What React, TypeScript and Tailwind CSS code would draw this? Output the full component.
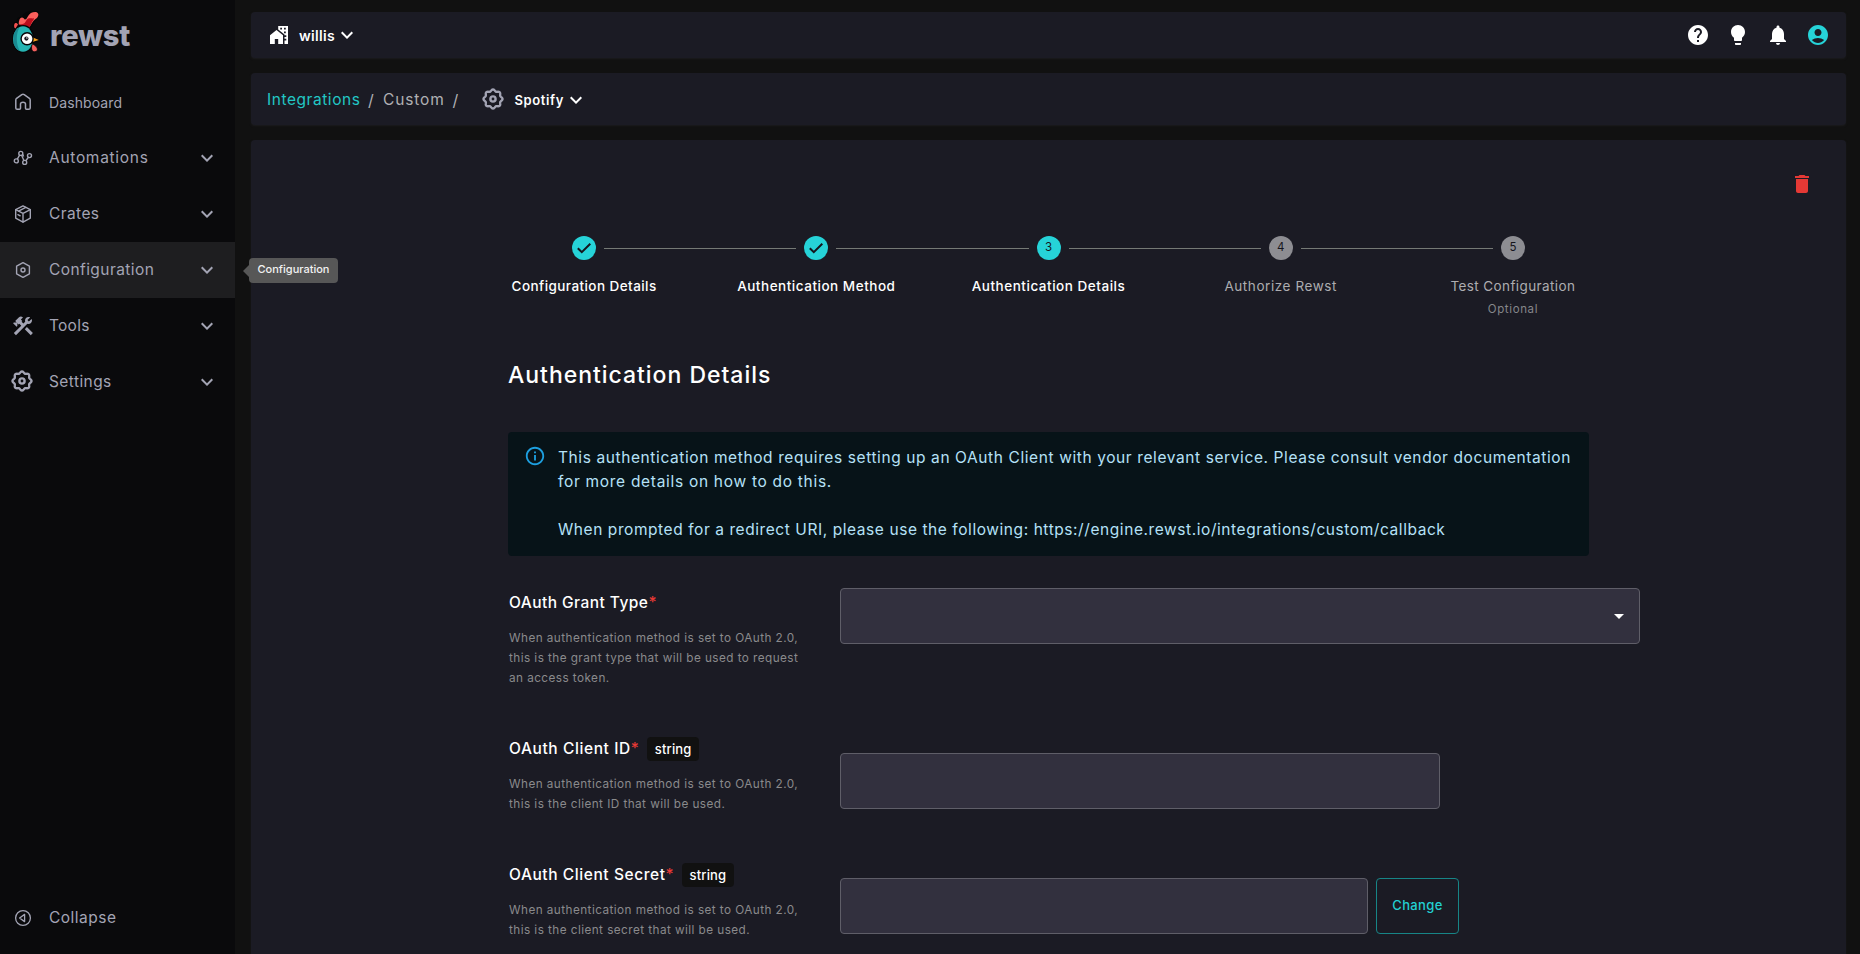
import type { ReactNode } from "react";
import {
  MdAccountCircle,
  MdArrowDropDown,
  MdConstruction,
  MdDelete,
  MdExpandMore,
  MdHelp,
  MdInfoOutline,
  MdLightbulb,
  MdNotifications,
} from "react-icons/md";

const scallop = (() => {
  const pts: string[] = [];
  for (let i = 0; i < 96; i++) {
    const a = (i / 96) * Math.PI * 2;
    const r = 8.7 + 0.85 * Math.cos(8 * a);
    pts.push(`${(12 + r * Math.cos(a)).toFixed(2)} ${(12 + r * Math.sin(a)).toFixed(2)}`);
  }
  return `M${pts.join("L")}Z`;
})();

function GearIcon() {
  return (
    <svg viewBox="0 0 24 24" className="size-6 text-[#a3a4b4]" fill="none" stroke="currentColor" strokeWidth="2.3" strokeLinejoin="round">
      <path d={scallop} />
      <circle cx="12" cy="12" r="2.6" strokeWidth="2.4" />
    </svg>
  );
}

function HomeIcon() {
  return (
    <svg viewBox="0 0 20 20" className="size-5" fill="none" stroke="currentColor" strokeWidth="1.5" strokeLinejoin="round">
      <path d="M2.8 8Q2.8 7 3.6 6.3L8.8 2.6Q10 1.8 11.2 2.600L16.4 6.300Q17.2 7 17.2 8V16Q17.2 17.300 15.900 17.300H13.500Q12.500 17.300 12.500 16.300V12Q12.500 10.200 10 10.200Q7.500 10.200 7.500 12V16.300Q7.500 17.300 6.500 17.300H4.100Q2.800 17.300 2.800 16Z" />
    </svg>
  );
}

function NodesIcon() {
  return (
    <svg viewBox="0 0 20 20" className="size-5" fill="none" stroke="currentColor" strokeWidth="1.4">
      <circle cx="3.300" cy="12.900" r="2" />
      <circle cx="7.800" cy="5.400" r="2" />
      <circle cx="11.700" cy="14.400" r="2" />
      <circle cx="16.500" cy="7.600" r="2" />
      <path d="M4.300 11.200 6.600 7.100M8.600 7.200 10.900 12.600M12.800 12.700 15.400 9.300" />
      <path d="M9.600 6.200 10.600 8.500" />
    </svg>
  );
}

function CrateIcon() {
  return (
    <svg viewBox="0 0 20 20" className="size-5" fill="none" stroke="currentColor" strokeWidth="1.4" strokeLinejoin="round" strokeLinecap="round">
      <path d="M10 1.900 17.300 5.700V14.200L10 18.100 2.700 14.200V5.700Z" />
      <path d="M2.700 5.700 10 9.400 17.300 5.700M10 9.400V18.100" />
      <path d="M6 7.400V6.900L12.800 3.400M4.900 10.600 7.200 11.800" strokeWidth="1.300" />
    </svg>
  );
}

function HexIcon() {
  return (
    <svg viewBox="0 0 20 20" className="size-5" fill="none" stroke="currentColor" strokeWidth="1.4" strokeLinejoin="round">
      <path d="M10 2.600 16.400 6.200V13.800L10 17.400 3.600 13.800V6.200Z" />
      <circle cx="10" cy="10" r="2" />
    </svg>
  );
}

function CollapseIcon() {
  return (
    <svg viewBox="0 0 20 20" className="size-5" fill="none" stroke="currentColor" strokeWidth="1.3" strokeLinejoin="round">
      <circle cx="10" cy="10" r="7.400" />
      <path d="M6.600 10 11.600 6.400V13.600Z" />
    </svg>
  );
}

function OrgIcon() {
  return (
    <svg viewBox="0 0 18 18" className="size-[18px]" fill="currentColor">
      <path d="M0 9.200 6.500 4 13 9.200V18H8.200V13H4.800V18H0Z" />
      <path
        fillRule="evenodd"
        d="M8.200 0H18V18H14.500V8.400L8.200 3.600ZM10.200 1.800V3.600H12V1.800ZM14 1.800V3.600H15.800V1.800ZM14 5.400V7.200H15.800V5.400ZM14.500 9.200V11H16.300V9.200ZM14.500 12.800V14.600H16.300V12.800Z"
      />
    </svg>
  );
}

function RoosterLogo() {
  return (
    <svg viewBox="0 0 30 44" className="h-11 w-[30px]">
      <path d="M1 19C.2 14 2 12 4.500 14C4.500 10 6 6.500 10 8C11 3.500 17 1.500 23 1.800C28.500 2 28 8 24.500 10.500C21.500 13 20 18 17.500 20Z" fill="#060607" />
      <path d="M2.300 18.500C1.400 14.500 3.600 12.500 6 15.500L3.500 19.500Z" fill="#f4504f" />
      <path d="M6.800 15.500C6.500 10.500 9 6.500 12 9.500C12.500 11 14 11 15.500 8C17.500 4 20.500 2.800 24 3C27.500 3.800 27 8 23.500 10C20.500 12 19.500 15.500 16.500 19C13 16.500 11 15.500 6.800 15.500Z" fill="#fb5f5c" />
      <path d="M8.500 16C10 14.500 12.500 15.500 14 12C16 7.800 19 9.800 22 9.300C22 10.500 21 11.500 20.300 12.500C18.500 15 18.500 18 16.500 20.500Z" fill="#b90d1c" />
      <ellipse cx="11.300" cy="30" rx="11.200" ry="14" fill="#060607" />
      <ellipse cx="11" cy="30" rx="10" ry="12.800" fill="#26b4b2" />
      <path d="M7.500 18.200A10 12.800 0 0 0 8 42.200C3.800 35 3.800 25 7.500 18.200Z" fill="#198a91" />
      <path d="M19.500 27 28.300 31 19.500 34.800Z" fill="#060607" />
      <path d="M21 28.400 26.800 31 21 32.700Z" fill="#f9a01b" />
      <circle cx="15.100" cy="29.700" r="6.700" fill="#060607" />
      <circle cx="15.100" cy="29.700" r="5.300" fill="#ffffff" />
      <circle cx="14.400" cy="29.600" r="2.100" fill="#1a1a20" />
      <circle cx="14.900" cy="29" r=".7" fill="#ffffff" />
      <path d="M20.500 34.800C18.600 38.500 19.500 42.900 22.700 42.800C26.700 42.500 26.500 38 20.500 34.800Z" fill="#f4605e" stroke="#060607" strokeWidth=".8" />
    </svg>
  );
}

type NavItem = { label: string; icon: ReactNode; spacing: string; expandable?: boolean; active?: boolean };

const nav: NavItem[] = [
  { label: "Dashboard", icon: <HomeIcon />, spacing: "text-[14px] tracking-[0.1px]" },
  { label: "Automations", icon: <NodesIcon />, spacing: "text-[15.5px] tracking-[0.7px]", expandable: true },
  { label: "Crates", icon: <CrateIcon />, spacing: "text-[15.5px] tracking-[0.4px]", expandable: true },
  { label: "Configuration", icon: <HexIcon />, spacing: "text-[15.5px] tracking-[0.42px]", expandable: true, active: true },
  { label: "Tools", icon: <MdConstruction className="size-6" />, spacing: "text-[15.5px] tracking-[0.25px]", expandable: true },
  { label: "Settings", icon: <span className="-ml-[3px] -mt-0.5"><GearIcon /></span>, spacing: "text-[15.5px] tracking-[0.42px]", expandable: true },
];

function NavRow({ item }: { item: NavItem }) {
  return (
    <div className={`flex h-14 shrink-0 items-center pr-4 ${item.active ? "bg-[#1e1e20]" : ""}`}>
      <span className="flex w-[46px] shrink-0 justify-center">{item.icon}</span>
      <span className={`ml-[3px] flex-1 ${item.spacing}`}>{item.label}</span>
      {item.expandable && <MdExpandMore className="size-6" />}
    </div>
  );
}

function Sidebar() {
  return (
    <aside className="flex h-full w-[235px] shrink-0 flex-col bg-[#0a0a0c] text-[#a3a4b4]">
      <div className="flex h-[74px] shrink-0 pt-[9px] pl-3">
        <RoosterLogo />
        <span className="ml-2 text-[29px] leading-[53px] font-extrabold tracking-[-0.2px]">rewst</span>
      </div>
      {nav.map((item) => (
        <NavRow key={item.label} item={item} />
      ))}
      <div className="mt-auto mb-2">
        <NavRow item={{ label: "Collapse", icon: <CollapseIcon />, spacing: "text-[15.5px] tracking-[0.5px]" }} />
      </div>
    </aside>
  );
}

type Step = { label: string; spacing: string; state: "done" | "current" | "todo"; note?: string };

const steps: Step[] = [
  { label: "Configuration Details", spacing: "tracking-[0.43px]", state: "done" },
  { label: "Authentication Method", spacing: "tracking-[0.52px]", state: "done" },
  { label: "Authentication Details", spacing: "tracking-[0.53px]", state: "current" },
  { label: "Authorize Rewst", spacing: "tracking-[0.57px]", state: "todo" },
  { label: "Test Configuration", spacing: "tracking-[0.39px]", state: "todo", note: "Optional" },
];

function Stepper() {
  return (
    <div className="mt-10 ml-[217px] flex w-[1161px] shrink-0">
      {steps.map((s, i) => (
        <div key={s.label} className="flex flex-1 flex-col items-center">
          <div className="flex h-6 w-full items-center">
            <div className={`mr-2 h-px flex-1 ${i > 0 ? "bg-[#757975]" : ""}`} />
            <div
              className={`flex size-6 items-center justify-center rounded-full text-[11.5px] text-[#15151c] ${
                s.state === "todo" ? "bg-[#8d8d92]" : "bg-[#26d3d8]"
              }`}
            >
              {s.state === "done" ? (
                <svg viewBox="0 0 24 24" className="size-6" fill="none" stroke="currentColor" strokeWidth="2">
                  <path d="M5.800 12.200 9.800 16.200 18.300 7.700" />
                </svg>
              ) : (
                i + 1
              )}
            </div>
            <div className={`ml-2 h-px flex-1 ${i < steps.length - 1 ? "bg-[#757975]" : ""}`} />
          </div>
          <div
            className={`mt-4 text-[13.5px] leading-5 whitespace-nowrap ${s.spacing} ${
              s.state === "todo" ? "text-[#adadb0]" : "font-medium text-white"
            }`}
          >
            {s.label}
          </div>
          {s.note && <div className="mt-[3px] text-[11.5px] leading-5 tracking-[0.62px] text-[#85868a]">{s.note}</div>}
        </div>
      ))}
    </div>
  );
}

function FieldLabel({ label, spacing, badge, help, height }: { label: string; spacing: string; badge?: boolean; help: string[]; height: string }) {
  return (
    <div className="w-[331px] shrink-0">
      <div className={`flex items-center text-[15.5px] font-medium text-white ${height}`}>
        <span className={spacing}>{label}</span>
        <span className="w-[9px] text-[#e53935]">*</span>
        {badge && (
          <span className="ml-[7px] rounded bg-[#111111] px-2 text-[13px] leading-6 tracking-[0.15px]">string</span>
        )}
      </div>
      <div className="mt-[11px] text-[11.75px] leading-[19.92px] tracking-[0.44px] whitespace-nowrap text-[#8a8a8c]">
        {help.map((h) => (
          <div key={h}>{h}</div>
        ))}
      </div>
    </div>
  );
}

const box = "rounded border border-[#5f5e68] bg-[#32303e]";
const panel = "rounded bg-[#1b1b24] shadow-[0_1px_2px_#1c1c1e]";

export default function App() {
  return (
    <div className="relative flex h-[954px] w-[1860px] overflow-hidden bg-[#111111] font-['Inter','Liberation_Sans',sans-serif] text-white">
      <Sidebar />
      <main className="flex w-[1611px] flex-col pt-3 pl-4">
        <header className={`flex h-[46px] shrink-0 items-center justify-between px-4 ${panel}`}>
          <div className="flex items-center text-white">
            <span className="ml-[3px]"><OrgIcon /></span>
            <span className="ml-[11px] text-[14px] font-semibold tracking-[0.3px]">willis</span>
            <MdExpandMore className="size-6" />
          </div>
          <div className="flex gap-4">
            <MdHelp className="size-6" />
            <MdLightbulb className="size-6" />
            <MdNotifications className="size-6" />
            <MdAccountCircle className="size-6 text-[#26d3d8]" />
          </div>
        </header>

        <nav className={`mt-[15px] flex h-[52px] shrink-0 items-center pl-4 text-[15.5px] text-[#b0b0b3] ${panel}`}>
          <span className="w-[101px] pt-0.5 tracking-[0.56px] text-[#22c7c5]">Integrations</span>
          <span className="w-[15px] pt-0.5 text-base">/</span>
          <span className="w-[69.5px] pt-0.5 tracking-[0.85px]">Custom</span>
          <span className="w-[28px] pt-0.5 text-base">/</span>
          <GearIcon />
          <span className="ml-[10px] pt-[3px] text-[13px] font-semibold tracking-[0.6px] text-white">Spotify</span>
          <MdExpandMore className="mt-0.5 size-6 text-white" />
        </nav>

        <section className={`mt-[15px] flex min-h-0 flex-1 flex-col rounded-b-none ${panel}`}>
          <div className="flex h-[56px] shrink-0 items-end justify-end pr-8">
            <MdDelete className="size-6 text-[#e53935]" />
          </div>
          <Stepper />

          <div className="ml-[257px] flex flex-col">
            <h1 className="mt-10 text-[23px] leading-8 font-medium tracking-[0.97px]">Authentication Details</h1>

            <div className="mt-[41px] flex h-[124px] w-[1081px] rounded bg-[#071318] py-[14px] pl-4">
              <MdInfoOutline className="-mt-px size-[22px] text-[#1d9fdf]" />
              <div className="ml-3 text-[15.5px] leading-6 whitespace-nowrap text-[#b5e1f7]">
                <div className="tracking-[0.6px]">
                  This authentication method requires setting up an OAuth Client with your relevant service. Please consult vendor documentation
                </div>
                <div className="tracking-[0.7px]">for more details on how to do this.</div>
                <div className="mt-6 tracking-[0.57px]">
                  When prompted for a redirect URI, please use the following: https://engine.rewst.io/integrations/custom/callback
                </div>
              </div>
            </div>

            <div className="mt-8 ml-px flex h-[145px]">
              <FieldLabel
                label="OAuth Grant Type"
                spacing="tracking-[0.45px]"
                height="h-[30px]"
                help={["When authentication method is set to OAuth 2.0,", "this is the grant type that will be used to request", "an access token."]}
              />
              <div className={`flex h-14 w-[800px] items-center justify-end pr-2 ${box}`}>
                <MdArrowDropDown className="size-6" />
              </div>
            </div>

            <div className="ml-px flex h-[126px]">
              <FieldLabel
                label="OAuth Client ID"
                spacing="tracking-[0.6px]"
                height="h-[31px]"
                badge
                help={["When authentication method is set to OAuth 2.0,", "this is the client ID that will be used."]}
              />
              <div className={`mt-5 h-14 w-[600px] ${box}`} />
            </div>

            <div className="ml-px flex h-[95px]">
              <FieldLabel
                label="OAuth Client Secret"
                spacing="tracking-[0.58px]"
                height="h-[31px]"
                badge
                help={["When authentication method is set to OAuth 2.0,", "this is the client secret that will be used."]}
              />
              <div className={`mt-[19px] h-14 w-[528px] ${box}`} />
              <div className="mt-[19px] ml-2 flex h-14 w-[83px] items-center justify-center rounded border border-[#178587] text-[13px] font-medium tracking-[0.35px] text-[#23d0d2]">
                Change
              </div>
            </div>
          </div>
        </section>
      </main>

      <div className="absolute top-[258px] left-[243px] flex items-center">
        <svg viewBox="0 0 6 12" className="h-3 w-1.5" fill="#575757">
          <path d="M6 0 0 6 6 12Z" />
        </svg>
        <span className="h-[25px] w-[89px] rounded bg-[#575757] text-center text-[11px] leading-[23px] font-medium text-[#f2f2f2]">Configuration</span>
      </div>
    </div>
  );
}
